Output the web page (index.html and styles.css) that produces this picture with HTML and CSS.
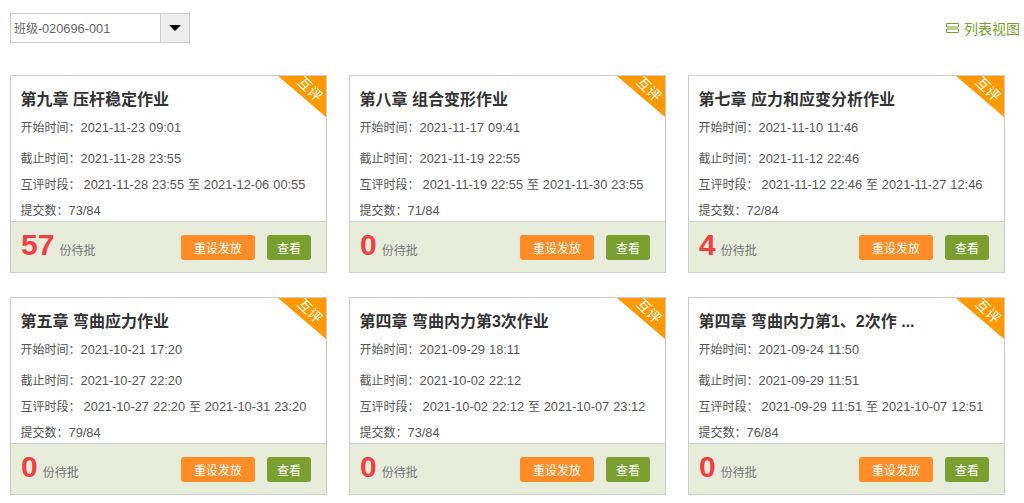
FILE: index.html
```html
<!DOCTYPE html>
<html lang="zh-CN">
  <head>
    <meta charset="UTF-8" />
    <title>作业列表</title>
    <link rel="stylesheet" href="styles.css">
  </head>

  <body>
    <div class="toolbar">
      <div class="class-select">
        <span class="class-name">班级-<i>020696-001</i></span>
        <span class="arrow-box"><span class="arrow"></span></span>
      </div>
      <a class="view-link">
        <svg class="view-icon" width="13" height="10" viewBox="0 0 13 10">
          <path d="M0.5 0.5h12v3.5h-12z M0.5 6h12v3.5h-12z" fill="none" stroke="#7a9f2f" stroke-width="1" />
        </svg>
        列表视图
      </a>
    </div>

    <div class="card-grid">
      <div class="card">
        <div class="ribbon"></div>
        <span class="ribbon-text">互评</span>
        <div class="card-body">
          <h3>第九章 压杆稳定作业</h3>
          <p class="row-start">开始时间：<i>2021-11-23 09:01</i></p>
          <p class="row-end">截止时间：<i>2021-11-28 23:55</i></p>
          <p class="row">互评时段：<i class="range">2021-11-28 23:55</i> 至 <i>2021-12-06 00:55</i></p>
          <p class="row">提交数：<i>73/84</i></p>
        </div>
        <div class="card-foot">
          <div class="pending"><b>57</b><span>份待批</span></div>
          <div class="actions"><button class="btn-reset">重设发放</button><button class="btn-view">查看</button></div>
        </div>
      </div>

      <div class="card">
        <div class="ribbon"></div>
        <span class="ribbon-text">互评</span>
        <div class="card-body">
          <h3>第八章 组合变形作业</h3>
          <p class="row-start">开始时间：<i>2021-11-17 09:41</i></p>
          <p class="row-end">截止时间：<i>2021-11-19 22:55</i></p>
          <p class="row">互评时段：<i class="range">2021-11-19 22:55</i> 至 <i>2021-11-30 23:55</i></p>
          <p class="row">提交数：<i>71/84</i></p>
        </div>
        <div class="card-foot">
          <div class="pending"><b>0</b><span>份待批</span></div>
          <div class="actions"><button class="btn-reset">重设发放</button><button class="btn-view">查看</button></div>
        </div>
      </div>

      <div class="card">
        <div class="ribbon"></div>
        <span class="ribbon-text">互评</span>
        <div class="card-body">
          <h3>第七章 应力和应变分析作业</h3>
          <p class="row-start">开始时间：<i>2021-11-10 11:46</i></p>
          <p class="row-end">截止时间：<i>2021-11-12 22:46</i></p>
          <p class="row">互评时段：<i class="range">2021-11-12 22:46</i> 至 <i>2021-11-27 12:46</i></p>
          <p class="row">提交数：<i>72/84</i></p>
        </div>
        <div class="card-foot">
          <div class="pending"><b>4</b><span>份待批</span></div>
          <div class="actions"><button class="btn-reset">重设发放</button><button class="btn-view">查看</button></div>
        </div>
      </div>

      <div class="card">
        <div class="ribbon"></div>
        <span class="ribbon-text">互评</span>
        <div class="card-body">
          <h3>第五章 弯曲应力作业</h3>
          <p class="row-start">开始时间：<i>2021-10-21 17:20</i></p>
          <p class="row-end">截止时间：<i>2021-10-27 22:20</i></p>
          <p class="row">互评时段：<i class="range">2021-10-27 22:20</i> 至 <i>2021-10-31 23:20</i></p>
          <p class="row">提交数：<i>79/84</i></p>
        </div>
        <div class="card-foot">
          <div class="pending"><b>0</b><span>份待批</span></div>
          <div class="actions"><button class="btn-reset">重设发放</button><button class="btn-view">查看</button></div>
        </div>
      </div>

      <div class="card">
        <div class="ribbon"></div>
        <span class="ribbon-text">互评</span>
        <div class="card-body">
          <h3>第四章 弯曲内力第3次作业</h3>
          <p class="row-start">开始时间：<i>2021-09-29 18:11</i></p>
          <p class="row-end">截止时间：<i>2021-10-02 22:12</i></p>
          <p class="row">互评时段：<i class="range">2021-10-02 22:12</i> 至 <i>2021-10-07 23:12</i></p>
          <p class="row">提交数：<i>73/84</i></p>
        </div>
        <div class="card-foot">
          <div class="pending"><b>0</b><span>份待批</span></div>
          <div class="actions"><button class="btn-reset">重设发放</button><button class="btn-view">查看</button></div>
        </div>
      </div>

      <div class="card">
        <div class="ribbon"></div>
        <span class="ribbon-text">互评</span>
        <div class="card-body">
          <h3>第四章 弯曲内力第1、2次作 ...</h3>
          <p class="row-start">开始时间：<i>2021-09-24 11:50</i></p>
          <p class="row-end">截止时间：<i>2021-09-29 11:51</i></p>
          <p class="row">互评时段：<i class="range">2021-09-29 11:51</i> 至 <i>2021-10-07 12:51</i></p>
          <p class="row">提交数：<i>76/84</i></p>
        </div>
        <div class="card-foot">
          <div class="pending"><b>0</b><span>份待批</span></div>
          <div class="actions"><button class="btn-reset">重设发放</button><button class="btn-view">查看</button></div>
        </div>
      </div>
    </div>
  </body>
</html>
```

FILE: styles.css
```css
html, body {
  margin: 0;
  padding: 0;
  background: #fff;
}

body {
  height: 503px;
  overflow: hidden;
  padding: 13px 4px 0 10px;
  box-sizing: border-box;
  font-family: "Liberation Sans", "Noto Sans CJK SC", sans-serif;
  font-size: 12px;
  color: #555;
}

i {
  font-style: normal;
  font-size: 12.8px;
}

.toolbar {
  display: flex;
  justify-content: space-between;
  align-items: center;
  height: 30px;
  margin-bottom: 32px;
}

.class-select {
  display: flex;
  width: 180px;
  height: 30px;
  box-sizing: border-box;
  border: 1px solid #ccc;
}

.class-name {
  flex: 1;
  padding: 1px 0 0 3px;
  line-height: 28px;
  color: #666;
}

.arrow-box {
  width: 28px;
  display: flex;
  justify-content: center;
  align-items: center;
  background: #eee;
  border-left: 1px solid #ccc;
}

.arrow {
  width: 0;
  height: 0;
  border-left: 6px solid transparent;
  border-right: 6px solid transparent;
  border-top: 6px solid #000;
}

.view-link {
  display: flex;
  align-items: center;
  gap: 5px;
  color: #7a9f2f;
  font-size: 14px;
}

.card-grid {
  display: grid;
  grid-template-columns: repeat(3, 317px);
  column-gap: 22px;
  row-gap: 24px;
}

.card {
  position: relative;
  height: 198px;
  box-sizing: border-box;
  border: 1px solid #ccc;
  display: flex;
  flex-direction: column;
}

.ribbon {
  position: absolute;
  top: 0;
  right: 0;
  width: 48px;
  height: 41px;
  background: #ff9900;
  clip-path: polygon(0 0, 100% 0, 100% 100%);
}

.ribbon-text {
  position: absolute;
  top: 4px;
  right: 2px;
  color: #fff;
  font-size: 14px;
  line-height: 18px;
  transform: rotate(45deg);
}

.card-body {
  height: 145px;
  padding: 0 9.5px;
  box-sizing: border-box;
  overflow: hidden;
}

.card-body h3 {
  margin: 13px 0 0;
  font-size: 16px;
  line-height: 22px;
  font-weight: bold;
  color: #333;
}

.card-body p {
  margin: 0;
  line-height: 26px;
  white-space: nowrap;
  word-spacing: 0.5px;
}

.row-start {
  margin-top: 4px !important;
  height: 31px;
}

.range {
  margin-left: 3px;
}

.card-foot {
  flex: 1;
  display: flex;
  justify-content: space-between;
  align-items: center;
  padding: 0 15px 0 10px;
  background: #e8ecdb;
  border-top: 1px solid #ccc;
}

.pending {
  margin-top: -4px;
}

.pending b {
  font-size: 30px;
  color: #f04040;
  margin-right: 5px;
}

.pending span {
  color: #777;
}

.actions {
  display: flex;
  gap: 12px;
}

.actions button {
  height: 25px;
  padding: 0;
  border: none;
  border-radius: 3px;
  color: #fff;
  font-family: inherit;
  font-size: 12px;
}

.btn-reset {
  width: 74px;
  background: #ff8c26;
}

.btn-view {
  width: 44px;
  background: #7a9f2f;
}
```
